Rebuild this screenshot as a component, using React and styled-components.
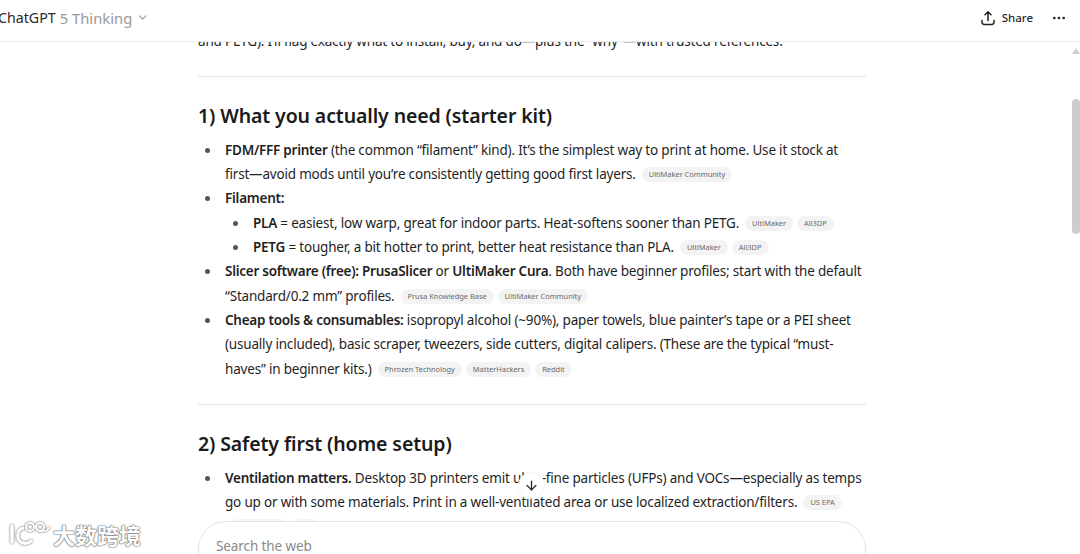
import React from 'react'
import styled, { createGlobalStyle } from 'styled-components'
import { ChevronDown, Ellipsis, ArrowDown } from 'lucide-react'

const GlobalStyle = createGlobalStyle`
  html, body {
    margin: 0;
    height: 100%;
    background: #fff;
    overflow: hidden;
  }
  * { box-sizing: border-box; }
`

const Page = styled.div`
  position: relative;
  width: 1080px;
  height: 554px;
  overflow: hidden;
  background: #fff;
  color: #1f1f1f;
  font-family: "Noto Sans", "Open Sans", sans-serif;
  font-size: 13.5px;
  letter-spacing: -0.19px;
  line-height: 24.33px;

  b {
    font-weight: 600;
    letter-spacing: -0.25px;
  }
`

const Header = styled.header`
  position: absolute;
  top: 0;
  left: 0;
  right: 0;
  height: 42px;
  z-index: 3;
  display: flex;
  align-items: center;
  justify-content: space-between;
  padding: 0 13px 5px 0;
  background: #fff;
  border-bottom: 1px solid #ececec;
  letter-spacing: 0;
`

const Model = styled.div`
  display: flex;
  align-items: center;
  gap: 4px;
  margin-left: -2px;
  font-size: 14.2px;
  color: #2a2a2a;
  span { color: #9a9a9a; font-size: 14.8px; }
  svg { color: #9a9a9a; }
`

const Actions = styled.div`
  display: flex;
  align-items: center;
  gap: 18px;
`

const ShareButton = styled.div`
  display: flex;
  align-items: center;
  gap: 7px;
  font-size: 11.5px;
  font-weight: 500;
  color: #2a2a2a;
`

const Thread = styled.main`
  width: 668px;
  margin-left: 198px;
  padding-top: 29px;
`

const Paragraph = styled.p`
  margin: 0;
  white-space: nowrap;
`

const Rule = styled.hr`
  margin: 23px 0 0;
  border: 0;
  border-top: 1px solid #e3e3e3;
`

const Heading = styled.h2`
  margin: 23px 0 0;
  font-size: 19.5px;
  letter-spacing: -0.11px;
  line-height: 32px;
  font-weight: 600;
  color: #1a1a1a;
`

const List = styled.ul`
  margin: ${p => (p.$nested ? '0' : '5.5px 0 0')};
  padding: 0 ${p => (p.$nested ? '0' : '4px')} 0 ${p => (p.$nested ? '28px' : '27px')};
  list-style: none;
`

const Item = styled.li`
  position: relative;
  &::before {
    content: '';
    position: absolute;
    left: -20px;
    top: 10px;
    width: 5px;
    height: 5px;
    border-radius: 50%;
    background: #555;
  }
`

const Chip = styled.span`
  display: inline-block;
  margin: 5px 0 0 ${p => (p.$first ? '6px' : '4px')};
  padding: 0 7px;
  height: 15px;
  line-height: 15px;
  vertical-align: top;
  border-radius: 8px;
  background: #f3f3f3;
  color: #6a6a6a;
  font-size: 7.5px;
  letter-spacing: -0.05px;
`

const ScrollTrack = styled.div`
  position: absolute;
  top: 41px;
  right: 0;
  bottom: 0;
  width: 9px;
  z-index: 2;
`

const ScrollArrow = styled.div`
  position: absolute;
  top: 7px;
  left: 1px;
  width: 0;
  height: 0;
  border-left: 4px solid transparent;
  border-right: 4px solid transparent;
  border-bottom: 6px solid #d0d0d0;
`

const ScrollThumb = styled.div`
  position: absolute;
  top: 58px;
  left: 1px;
  width: 8px;
  height: 135px;
  border-radius: 4px;
  background: #cdcdcd;
`

const JumpButton = styled.div`
  position: absolute;
  left: 518px;
  top: 472px;
  width: 27px;
  height: 27px;
  z-index: 2;
  display: flex;
  align-items: center;
  justify-content: center;
  border-radius: 50%;
  background: #fff;
  border: 1px solid #f4f4f4;
  color: #222;
`

const Composer = styled.div`
  position: absolute;
  left: 198px;
  top: 521px;
  width: 668px;
  height: 70px;
  z-index: 2;
  padding: 14px 17px;
  background: #fff;
  border: 1px solid #e4e4e4;
  border-radius: 28px;
  color: #8a8a8a;
  font-size: 13.5px;
  letter-spacing: -0.1px;
  line-height: 20px;
`

const Watermark = styled.div`
  position: absolute;
  left: 9px;
  top: 521px;
  z-index: 4;
  display: flex;
  align-items: center;
  gap: 2px;
  color: #fff;
  font-family: "Noto Sans CJK SC", sans-serif;
  font-size: 22px;
  letter-spacing: 0;
  line-height: 26px;
  font-weight: 700;
  text-shadow: 0 0 2px #666, 0 0 1px #666, 0 0 1px #666;
`

const WatermarkLogo = () => (
  <svg width="42" height="26" viewBox="0 0 42 26" fill="none" stroke="#fff" strokeLinecap="round" style={{ filter: 'drop-shadow(0 0 1px #555)' }}>
    <path d="M3 5 L3 21" strokeWidth="3.5" />
    <path d="M14 7 C7 9 7 20 14 22 C17 23 20 22 22 20" strokeWidth="3" />
    <circle cx="21" cy="6" r="4" strokeWidth="2" />
    <circle cx="31" cy="6" r="4" strokeWidth="2" />
    <path d="M27 6 a6 4 0 0 0 13 0" strokeWidth="1.5" />
  </svg>
)

const ShareIcon = () => (
  <svg width="14" height="16" viewBox="0 0 14 16" fill="none" stroke="#222" strokeWidth="1.5" strokeLinecap="round" strokeLinejoin="round">
    <path d="M7 10.5V2M4 4.8 7 1.8l3 3" />
    <path d="M1 10.5v1.6C1 13.5 2 14.5 3.4 14.5h7.2c1.4 0 2.4-1 2.4-2.4v-1.6" />
  </svg>
)

export default function App() {
  return (
    <Page>
      <GlobalStyle />
      <Header>
        <Model>
          ChatGPT <span>5 Thinking</span>
          <ChevronDown size={13} />
        </Model>
        <Actions>
          <ShareButton>
            <ShareIcon />
            Share
          </ShareButton>
          <Ellipsis size={16} color="#222" />
        </Actions>
      </Header>

      <Thread>
        <Paragraph>and PETG). I’ll flag exactly what to install, buy, and do—plus the “why”—with trusted references.</Paragraph>
        <Rule />
        <Heading>1) What you actually need (starter kit)</Heading>
        <List>
          <Item>
            <b>FDM/FFF printer</b> (the common “filament” kind). It’s the simplest way to print at home. Use it stock at first—avoid mods until you’re consistently getting good first layers.
            <Chip $first>UltiMaker Community</Chip>
          </Item>
          <Item>
            <b>Filament:</b>
            <List $nested>
              <Item>
                <b>PLA</b> = easiest, low warp, great for indoor parts. Heat-softens sooner than PETG.
                <Chip $first>UltiMaker</Chip>
                <Chip>All3DP</Chip>
              </Item>
              <Item>
                <b>PETG</b> = tougher, a bit hotter to print, better heat resistance than PLA.
                <Chip $first>UltiMaker</Chip>
                <Chip>All3DP</Chip>
              </Item>
            </List>
          </Item>
          <Item>
            <b>Slicer software (free): PrusaSlicer</b> or <b>UltiMaker Cura</b>. Both have beginner profiles; start with the default “Standard/0.2 mm” profiles.
            <Chip $first>Prusa Knowledge Base</Chip>
            <Chip>UltiMaker Community</Chip>
          </Item>
          <Item>
            <b>Cheap tools &amp; consumables:</b> isopropyl alcohol (~90%), paper towels, blue painter’s tape or a PEI sheet (usually included), basic scraper, tweezers, side cutters, digital calipers. (These are the typical “must-haves” in beginner kits.)
            <Chip $first>Phrozen Technology</Chip>
            <Chip>MatterHackers</Chip>
            <Chip>Reddit</Chip>
          </Item>
        </List>
        <Rule />
        <Heading>2) Safety first (home setup)</Heading>
        <List>
          <Item>
            <b>Ventilation matters.</b> Desktop 3D printers emit ultra-fine particles (UFPs) and VOCs—especially as temps go up or with some materials. Print in a well-ventilated area or use localized extraction/filters.
            <Chip $first>US EPA</Chip>
            <Chip $first>UL Research</Chip>
            <Chip>NIH</Chip>
          </Item>
        </List>
      </Thread>

      <ScrollTrack>
        <ScrollArrow />
        <ScrollThumb />
      </ScrollTrack>
      <JumpButton>
        <ArrowDown size={15} />
      </JumpButton>
      <Composer>Search the web</Composer>
      <Watermark>
        <WatermarkLogo />
        大数跨境
      </Watermark>
    </Page>
  )
}
